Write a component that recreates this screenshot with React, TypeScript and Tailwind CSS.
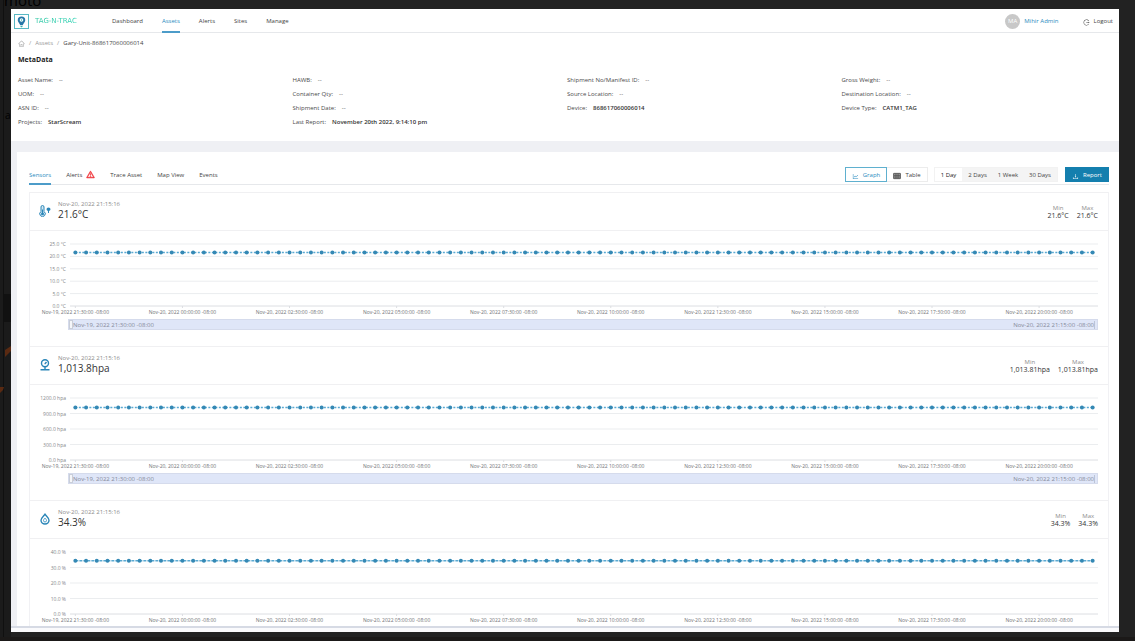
import React from "react";
import {
  AiOutlineDownload,
  AiOutlineHome,
  AiOutlineLineChart,
  AiOutlineLogout,
  AiOutlineTable,
  AiOutlineWarning,
} from "react-icons/ai";

const POINTS = 96;
const PLOT_HEIGHT = 62;

const TICKS = [
  "Nov-19, 2022 21:30:00 -08:00",
  "Nov-20, 2022 00:00:00 -08:00",
  "Nov-20, 2022 02:30:00 -08:00",
  "Nov-20, 2022 05:00:00 -08:00",
  "Nov-20, 2022 07:30:00 -08:00",
  "Nov-20, 2022 10:00:00 -08:00",
  "Nov-20, 2022 12:30:00 -08:00",
  "Nov-20, 2022 15:00:00 -08:00",
  "Nov-20, 2022 17:30:00 -08:00",
  "Nov-20, 2022 20:00:00 -08:00",
];

const META: { label: string; value?: string }[][] = [
  [{ label: "Asset Name" }, { label: "UOM" }, { label: "ASN ID" }, { label: "Projects", value: "StarScream" }],
  [
    { label: "HAWB" },
    { label: "Container Qty" },
    { label: "Shipment Date" },
    { label: "Last Report", value: "November 20th 2022, 9:14:10 pm" },
  ],
  [{ label: "Shipment No/Manifest ID" }, { label: "Source Location" }, { label: "Device", value: "868617060006014" }],
  [{ label: "Gross Weight" }, { label: "Destination Location" }, { label: "Device Type", value: "CATM1_TAG" }],
];

function ThermometerIcon() {
  return (
    <svg className="h-3 w-3" viewBox="0 0 24 24" fill="none" stroke="#2b86b8" strokeWidth="2" aria-hidden="true">
      <path d="M4 13V4a3 3 0 0 1 6 0v9a5.500 5.500 0 1 1-6 0z" fill="#d3e8f3" />
      <circle cx="7" cy="17.500" r="3" fill="#2b86b8" stroke="none" />
      <path d="M7 16V9" />
      <path d="M15 8.500a4 3.500 0 0 1 8 0q0 2-3 3.500v4h-2v-4q-3-1.500-3-3.500z" fill="#2b86b8" stroke="none" />
    </svg>
  );
}

function PressureIcon() {
  return (
    <svg className="h-3 w-3" viewBox="0 0 24 24" fill="none" stroke="#2b86b8" strokeWidth="2.800" aria-hidden="true">
      <circle cx="12" cy="8.500" r="7" />
      <path d="M12 9.500l3-3.500M12 15.500V21M3 21.500h18" />
      <circle cx="12" cy="9.500" r="1.200" fill="#2b86b8" stroke="none" />
    </svg>
  );
}

function DropIcon() {
  return (
    <svg className="h-3 w-3" viewBox="0 0 24 24" fill="none" stroke="#2b86b8" strokeWidth="2.800" aria-hidden="true">
      <path d="M12 2.500c3 4 8 7.500 8 12a8 7.500 0 0 1-16 0c0-4.500 5-8 8-12z" />
      <path d="M12 10c1.500 2 3 3.300 3 5a3 3 0 0 1-6 0c0-1.700 1.500-3 3-5z" strokeWidth="1.600" />
    </svg>
  );
}

type Sensor = {
  id: string;
  icon: React.ReactNode;
  reading: string;
  range: string;
  value: number;
  max: number;
  step: number;
  unit: string;
  dash: string;
  zoomable: boolean;
};

const SENSORS: Sensor[] = [
  { id: "Temperature", icon: <ThermometerIcon />, reading: "21.6°C", range: "21.6°C", value: 21.6, max: 25, step: 5, unit: " °C", dash: "2 1.5", zoomable: true },
  { id: "Pressure", icon: <PressureIcon />, reading: "1,013.8hpa", range: "1,013.81hpa", value: 1013.81, max: 1200, step: 300, unit: " hpa", dash: "2 1.5", zoomable: true },
  { id: "Humidity", icon: <DropIcon />, reading: "34.3%", range: "34.3%", value: 34.3, max: 40, step: 10, unit: " %", dash: "3 1", zoomable: false },
];

const pointX = (i: number) => `${((i + 0.5) / POINTS) * 100}%`;

function Plot({ sensor }: { sensor: Sensor }) {
  const levels: number[] = [];
  for (let v = 0; v <= sensor.max; v += sensor.step) levels.push(v);
  const toY = (v: number) => PLOT_HEIGHT - (v / sensor.max) * PLOT_HEIGHT;
  const lineY = toY(sensor.value);

  return (
    <svg className="block h-[75px] w-full overflow-visible text-[5px]" role="img" aria-label={`${sensor.id} graph`}>
      {levels.map((v) => (
        <g key={v}>
          <line x1="0" x2="100%" y1={toY(v)} y2={toY(v)} stroke={v === 0 ? "#dcdee2" : "#ebedef"} strokeWidth="1" />
          <text x="-4" y={toY(v) + 2} textAnchor="end" fill="#85878a">
            {v.toFixed(1) + sensor.unit}
          </text>
        </g>
      ))}
      <line x1={pointX(0)} x2={pointX(POINTS - 1)} y1={lineY} y2={lineY} stroke="#5aa9d2" strokeWidth="1.500" strokeDasharray={sensor.dash} />
      {Array.from({ length: POINTS }, (_, i) => (
        <circle key={i} cx={pointX(i)} cy={lineY} r="2" fill="#3488b4" />
      ))}
      {TICKS.map((label, i) => (
        <g key={label}>
          <line x1={pointX(i * 10)} x2={pointX(i * 10)} y1={PLOT_HEIGHT} y2={PLOT_HEIGHT + 2} stroke="#dcdee2" />
          <text x={pointX(i * 10)} y={PLOT_HEIGHT + 8} textAnchor="middle" fill="#707275">
            {label}
          </text>
        </g>
      ))}
    </svg>
  );
}

function SensorCard({ sensor }: { sensor: Sensor }) {
  return (
    <section className="border-t border-[#f0f0f2]">
      <header className="flex h-[38px] items-center border-b border-[#f0f0f2] pr-2.5 pb-0.5 pl-[9px]">
        {sensor.icon}
        <div className="ml-[7px]">
          <p className="text-[6px] leading-[7px] text-[#8c8c8c]">Nov-20, 2022 21:15:16</p>
          <p className="text-[10px] leading-[12px] text-[#333]">{sensor.reading}</p>
        </div>
        <dl className="mt-0.5 ml-auto flex gap-2 text-center">
          {["Min", "Max"].map((name) => (
            <div key={name}>
              <dt className="text-[6px] leading-[8px] text-[#8c8c8c]">{name}</dt>
              <dd className="text-[7px] leading-[8px] text-[#333]">{sensor.range}</dd>
            </div>
          ))}
        </dl>
      </header>
      <div className="pt-[13px] pr-2.5 pb-4 pl-10">
        <Plot sensor={sensor} />
        {sensor.zoomable && (
          <div className="-ml-0.5 flex h-[11px] items-center justify-between border border-[#d5dbec] bg-[#dfe6f8] pr-0.5 text-[6px] leading-[8px] text-[#85899a]">
            <span className="flex items-center">
              <span className="h-[9px] w-1 border border-[#c9ced9] bg-[#f5f6f9]" />
              Nov-19, 2022 21:30:00 -08:00
            </span>
            <span className="border-r border-[#bcc4d6]">Nov-20, 2022 21:15:00 -08:00</span>
          </div>
        )}
      </div>
    </section>
  );
}

function TopBar() {
  return (
    <header className="flex h-6 shrink-0 items-center border-b border-[#e6e8eb] pr-1.5 pl-[3px]">
      <svg className="mt-px h-[15px] w-[15px]" viewBox="0 0 30 30" aria-hidden="true">
        <rect x="1" y="1" width="28" height="28" fill="#fff" stroke="#58b9c4" strokeWidth="2" />
        <path d="M15 5a7.500 7.500 0 0 0-7.500 7.500c0 4 4 6 5 10h5c1-4 5-6 5-10A7.500 7.500 0 0 0 15 5z" fill="#2878a8" />
        <path d="M12 24h6l-3 3z" fill="#33b6ac" />
        <circle cx="15" cy="12" r="3.600" fill="#fff" />
        <circle cx="15" cy="12" r="1.500" fill="#3bb8ae" />
      </svg>
      <span className="mt-px ml-1.5 w-[43px] bg-linear-to-r from-[#2fc7a4] to-[#2ed3b4] bg-clip-text font-['DejaVu_Sans'] text-[7px] whitespace-nowrap text-transparent">
        TAG-N-TRAC
      </span>
      <nav className="ml-[34px] flex h-full gap-[19px]" aria-label="Main">
        {["Dashboard", "Assets", "Alerts", "Sites", "Manage"].map((item) => (
          <a
            key={item}
            href="#"
            className={
              item === "Assets"
                ? "flex h-6 items-center border-b-2 border-[#4c9cc9] pt-0.5 text-[#2b8cc0]"
                : "flex h-6 items-center border-b-2 border-transparent pt-0.5"
            }
          >
            {item}
          </a>
        ))}
      </nav>
      <span className="mt-px ml-auto flex h-[15px] w-[15px] items-center justify-center rounded-full bg-[#c8c8c8] text-white">MA</span>
      <a href="#" className="ml-1 text-[#2b8cc0]">
        Mihir Admin
      </a>
      <button type="button" className="ml-6 flex items-center gap-1">
        <AiOutlineLogout className="mt-[3px] h-[7px] w-[7px]" />
        Logout
      </button>
    </header>
  );
}

function MetaData() {
  return (
    <section className="h-[108px] shrink-0 pt-[5px] pr-[3px] pl-[7px]">
      <nav className="flex h-[9px] items-center gap-1 text-[#999]" aria-label="Breadcrumb">
        <a href="#" aria-label="Home">
          <AiOutlineHome className="mt-0.5 h-[7px] w-[7px]" />
        </a>
        <span>/</span>
        <a href="#">Assets</a>
        <span>/</span>
        <span className="text-[#444]">Gary-Unit-868617060006014</span>
      </nav>
      <h1 className="mt-2 text-[7px] leading-[10px] font-bold text-[#222]">MetaData</h1>
      <div className="mt-2 grid grid-cols-4">
        {META.map((column) => (
          <dl key={column[0].label}>
            {column.map(({ label, value }) => (
              <div key={label} className="flex h-[14px] items-center gap-1.5 text-[#4a4a4a]">
                <dt>{label}:</dt>
                <dd className={value ? "font-semibold text-[#333]" : ""}>{value ?? "--"}</dd>
              </div>
            ))}
          </dl>
        ))}
      </div>
    </section>
  );
}

function Toolbar() {
  return (
    <div className="flex h-[18px] items-start border-b border-[#e6e8eb]">
      <nav className="flex gap-[15px]" aria-label="Asset views">
        {["Sensors", "Alerts", "Trace Asset", "Map View", "Events"].map((tab) => (
          <a
            key={tab}
            href="#"
            className={
              tab === "Sensors"
                ? "flex h-[18px] items-center border-b-2 border-[#4c9cc9] pb-px text-[#2b8cc0]"
                : "flex h-[18px] items-center gap-1 border-b-2 border-transparent pb-px"
            }
          >
            {tab}
            {tab === "Alerts" && <AiOutlineWarning className="h-[9px] w-[9px] text-[#f0383c]" strokeWidth="60" />}
          </a>
        ))}
      </nav>
      <div className="ml-auto flex h-[15px]">
        <button type="button" className="flex w-[42px] items-center justify-center gap-1 border border-[#5fb0cf] text-[#2b8cc0]">
          <AiOutlineLineChart className="mt-[3px] h-[7px] w-[7px]" />
          Graph
        </button>
        <button type="button" className="flex w-[41px] items-center justify-center gap-1 border border-l-0 border-[#ececec]">
          <AiOutlineTable className="mt-[3px] h-2 w-2" strokeWidth="60" />
          Table
        </button>
      </div>
      <div className="ml-1.5 flex h-[15px] border border-[#f2f2f2] bg-[#f4f4f4]">
        <button type="button" className="w-[27px] bg-white text-[#222]">1 Day</button>
        <button type="button" className="w-[31px]">2 Days</button>
        <button type="button" className="w-[30px]">1 Week</button>
        <button type="button" className="w-[34px]">30 Days</button>
      </div>
      <button type="button" className="ml-[7px] flex h-[15px] w-11 items-center justify-center gap-1 bg-[#147fae] text-white">
        <AiOutlineDownload className="mt-[3px] h-[7px] w-[7px]" />
        Report
      </button>
    </div>
  );
}

function Backdrop() {
  return (
    <div className="absolute inset-0 overflow-hidden bg-[#222] text-[10px] leading-3 text-black" aria-hidden="true">
      <div className="absolute inset-y-0 left-0 w-[11px] bg-[#1b1b1b]" />
      <div className="absolute inset-y-0 left-[3px] w-px bg-[#101010]" />
      <div className="absolute top-[294px] left-1 h-7 w-2 bg-[#111]" />
      <svg className="absolute top-[344px] left-0 h-[52px] w-[11px]" viewBox="0 0 11 52">
        <path d="M5 6L11 2V7L5 13z" fill="#5a2a12" />
        <path d="M0 43h4l-1 3-3 3z" fill="#5a2a12" />
      </svg>
      <div className="absolute inset-x-0 bottom-0 h-1 bg-[#1b1918]" />
      <span className="absolute top-[-8px] left-1 text-[15px] leading-4">moto</span>
      <span className="absolute top-[109px] left-[5px]">a</span>
    </div>
  );
}

export default function App() {
  return (
    <div className="relative h-screen overflow-hidden pt-[9px] pr-4 pb-[9px] pl-[11px] font-['Open_Sans','Noto_Sans',sans-serif] text-[6px] leading-[8px] text-[#444]">
      <Backdrop />
      <div className="relative flex h-full flex-col bg-white">
        <TopBar />
        <MetaData />
        <main className="min-h-0 flex-1 overflow-hidden bg-[#eff0f4] pt-[11px] pl-1.5">
          <div className="bg-white pt-[15px] pr-2.5 pl-3">
            <Toolbar />
            <div className="mt-[7px] border-x border-[#f1f1f4]">
              {SENSORS.map((sensor) => (
                <SensorCard key={sensor.id} sensor={sensor} />
              ))}
            </div>
          </div>
        </main>
        <div className="h-1.5 shrink-0 border-t-2 border-[#d6dae4] bg-[#fafafc]" />
      </div>
    </div>
  );
}
